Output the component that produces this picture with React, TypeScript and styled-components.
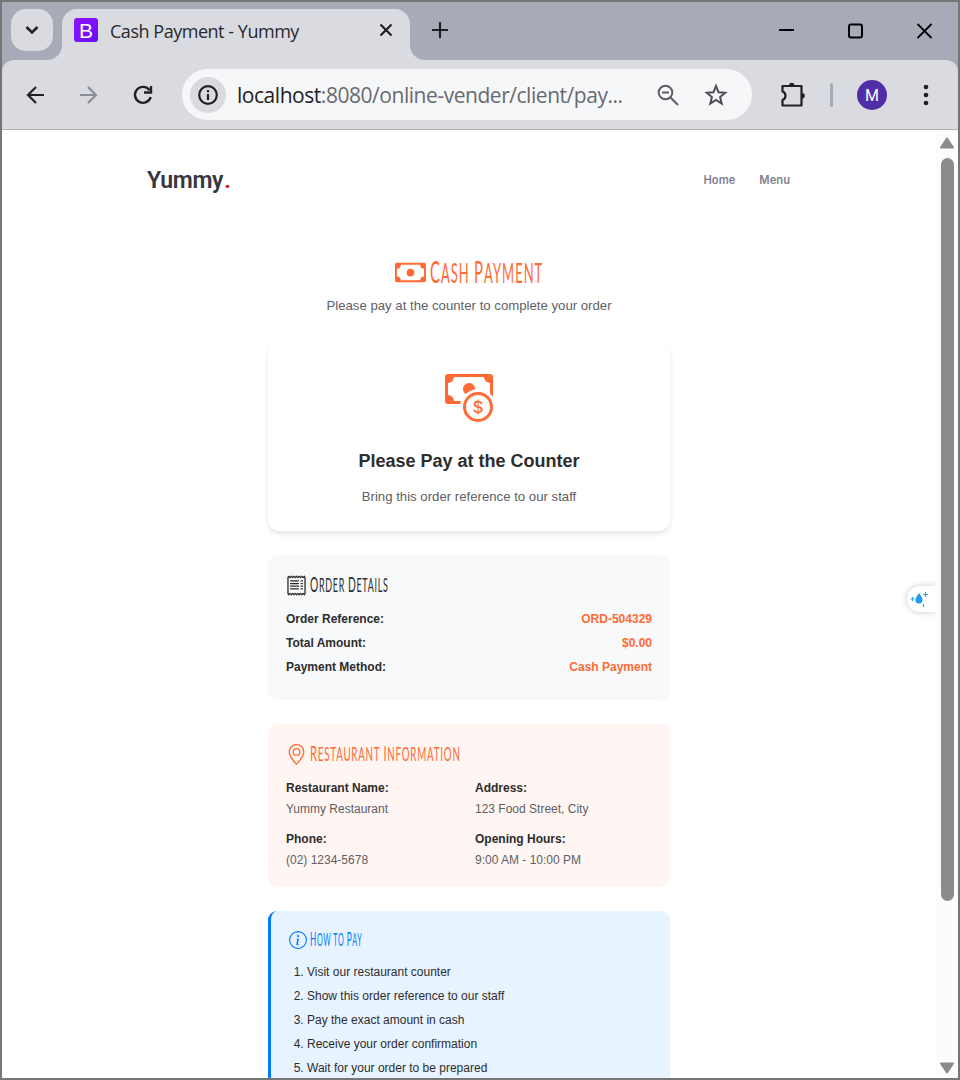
import React from 'react';
import styled, { createGlobalStyle } from 'styled-components';
import { BsCash, BsCashCoin, BsReceipt, BsGeoAlt, BsInfoCircle } from 'react-icons/bs';

const GlobalStyle = createGlobalStyle`
  * { box-sizing: border-box; }
  body { margin: 0; background: #fff; overflow: hidden; }
`;

const BrowserWindow = styled.div`
  width: 960px;
  height: 1080px;
  border: 2px solid #767676;
  overflow: hidden;
  display: flex;
  flex-direction: column;
  background: #a7abb7;
  font-family: 'Liberation Sans', Arial, sans-serif;
`;

const TabStrip = styled.header`
  height: 58px;
  flex: none;
  display: flex;
  padding: 7px 0 0 9px;
`;

const TabSearch = styled.button`
  width: 42px;
  height: 42px;
  padding: 0;
  border: 0;
  border-radius: 15px;
  background: #dadbe0;
  display: grid;
  place-items: center;
`;

const Tab = styled.div`
  position: relative;
  width: 348px;
  height: 51px;
  margin-left: 9px;
  border-radius: 15px 15px 0 0;
  background: #dadbe0;
  display: flex;
  align-items: center;
  padding: 0 16px 9px 12px;
  &::before, &::after {
    content: '';
    position: absolute;
    bottom: 0;
    width: 15px;
    height: 15px;
  }
  &::before { left: -15px; background: radial-gradient(circle at 0 0, transparent 14.5px, #dadbe0 15.5px); }
  &::after { right: -15px; background: radial-gradient(circle at 100% 0, transparent 14.5px, #dadbe0 15.5px); }
`;

const Favicon = styled.span`
  width: 24px;
  height: 24px;
  border-radius: 3px;
  background: linear-gradient(135deg, #9013fe, #6610f2);
  color: #fff;
  font: 500 21px/25px Roboto, sans-serif;
  font-family: 'Liberation Sans', sans-serif;
  text-align: center;
`;

const TabTitle = styled.span`
  flex: 1;
  margin-left: 12px;
  padding-top: 1px;
  font: 400 18px/24px 'Open Sans', sans-serif;
  letter-spacing: -0.47px;
  color: #28292c;
  white-space: nowrap;
`;

const NewTab = styled.span`
  margin: 13px 0 0 22px;
  height: 16px;
`;

const WindowControls = styled.div`
  margin-left: auto;
  padding: 14px 25px 0 0;
  display: flex;
  gap: 53px;
  height: 32px;
  svg { display: block; }
`;

const Toolbar = styled.nav`
  height: 70px;
  flex: none;
  display: flex;
  align-items: center;
  background: #dadbe0;
  border-bottom: 1px solid #b0b1b8;
  border-radius: 12px 12px 0 0;
  padding: 0 27px 0 23px;
  svg { display: block; flex: none; }
`;

const NavIcons = styled.div`
  display: flex;
  gap: 34px;
`;

const AddressBar = styled.div`
  width: 570px;
  height: 51px;
  margin: 0 28px 0 29px;
  border-radius: 26px;
  background: #f6f7f9;
  display: flex;
  align-items: center;
  padding: 0 24px 0 7.5px;
`;

const SiteInfo = styled.span`
  width: 36px;
  height: 36px;
  border-radius: 50%;
  background: #dadbe0;
  display: grid;
  place-items: center;
`;

const Url = styled.span`
  flex: 1;
  margin-left: 11.5px;
  font: 400 21px/30px 'Open Sans', sans-serif;
  letter-spacing: -0.46px;
  color: #686a6e;
  white-space: nowrap;
  b { font-weight: 400; color: #202124; }
`;

const AddressActions = styled.div`
  display: flex;
  gap: 24px;
`;

const Divider = styled.i`
  width: 3px;
  height: 24px;
  border-radius: 2px;
  background: #a7abb7;
  margin: 0 24px;
`;

const Avatar = styled.span`
  width: 30px;
  height: 30px;
  border-radius: 50%;
  background: #512da8;
  color: #fff;
  font: 400 16px/31px Roboto, sans-serif;
  text-align: center;
  margin-right: 36px;
`;

const Viewport = styled.div`
  position: relative;
  flex: 1;
  min-height: 0;
  display: flex;
  background: #fff;
`;

const Page = styled.div`
  flex: 1;
  min-width: 0;
  overflow: hidden;
`;

const SiteHeader = styled.div`
  height: 100px;
  display: flex;
  align-items: center;
  justify-content: space-between;
  padding: 0 146px 0 145px;
`;

const Brand = styled.div`
  font: 600 23px/27px Roboto, sans-serif;
  letter-spacing: -0.35px;
  color: #37373f;
  span { color: #ce1212; margin-left: 1px; }
`;

const Links = styled.div`
  display: flex;
  gap: 24px;
  font: 600 11.2px/18px Inter, sans-serif;
  color: #7f7f90;
`;

const Column = styled.main`
  width: 402px;
  margin: 27px auto 0;
`;

const PageTitle = styled.h1`
  margin: 0;
  height: 30px;
  display: flex;
  align-items: center;
  justify-content: center;
  gap: 4px;
  color: #ff6b35;
`;

const Subtitle = styled.p`
  margin: 9px 0 0;
  text-align: center;
  font-size: 13.2px;
  line-height: 20px;
  color: #5f6062;
`;

const Condensed = styled.span<{ $width: number; $scale: number; $size: number }>`
  display: block;
  width: ${p => p.$width}px;
  height: ${p => p.$size}px;
  span {
    display: block;
    width: max-content;
    transform: scaleX(${p => p.$scale});
    transform-origin: 0 50%;
    font: 400 ${p => p.$size * 0.87}px/${p => p.$size - 2}px Lato, sans-serif;
    letter-spacing: 0.08em;
    white-space: pre;
    text-transform: uppercase;
  }
  b { font-weight: 400; font-size: ${p => p.$size}px; }
`;

const PayCard = styled.section`
  margin-top: 26px;
  height: 189px;
  border-radius: 12px;
  box-shadow: 0 3px 5px rgba(0, 0, 0, 0.1);
  display: flex;
  flex-direction: column;
  align-items: center;
  padding-top: 32px;
  color: #ff6b35;
  h2 { margin: 27px 0 0; font-size: 18px; line-height: 24px; color: #2d2d2d; }
  p { margin: 14px 0 0; font-size: 13.2px; line-height: 20px; color: #5f6062; }
`;

const Panel = styled.section<{ $bg: string; $height: number; $accent?: string }>`
  margin-top: 24px;
  height: ${p => p.$height}px;
  border-radius: 9px;
  background: ${p => p.$bg};
  border-left: ${p => (p.$accent ? `3px solid ${p.$accent}` : '0')};
  padding: 18px;
  font-size: 12px;
  line-height: 18px;
  color: #2d2d2d;
`;

const PanelTitle = styled.h3<{ $color: string; $height: number; $gap: number }>`
  margin: 0 0 ${p => p.$gap}px;
  height: ${p => p.$height}px;
  display: flex;
  align-items: center;
  gap: 3px;
  color: ${p => p.$color};
`;

const DetailRow = styled.div`
  display: flex;
  justify-content: space-between;
  height: 24px;
  line-height: 24px;
  font-weight: 700;
  span { color: #ff6b35; }
`;

const InfoGrid = styled.div`
  display: grid;
  grid-template-columns: 189px 1fr;
  row-gap: 9px;
  line-height: 21px;
  p { margin: 0; color: #5f6062; }
`;

const Steps = styled.ol`
  margin: 0;
  padding-left: 18px;
  line-height: 24px;
`;

const Assistant = styled.div`
  position: absolute;
  left: 905px;
  top: 456px;
  width: 29px;
  height: 26px;
  border-radius: 13px 0 0 13px;
  background: #fff;
  box-shadow: 0 0 6px rgba(0, 0, 0, 0.22);
  clip-path: inset(-10px 0 -10px -10px);
  svg { display: block; }
`;

const ScrollTrack = styled.div`
  width: 22px;
  background: #fcfcfc;
  display: flex;
  flex-direction: column;
  align-items: center;
  padding: 7px 0 4px;
  svg { display: block; flex: none; }
`;

const ScrollThumb = styled.i`
  width: 13px;
  height: 743px;
  margin: 9px 0 auto;
  border-radius: 7px;
  background: #8b8b8b;
`;

const stroke = { fill: 'none', stroke: '#202124', strokeWidth: 2.2 };

function Fancy({ text, width, scale, size }: { text: string; width: number; scale: number; size: number }) {
  return (
    <Condensed $width={width} $scale={scale} $size={size}>
      <span>
        {text.split(' ').map((word, i) => (
          <React.Fragment key={word}>
            {i > 0 && ' '}
            {word === 'to' ? word : <><b>{word[0]}</b>{word.slice(1)}</>}
          </React.Fragment>
        ))}
      </span>
    </Condensed>
  );
}

const details = [
  ['Order Reference:', 'ORD-504329'],
  ['Total Amount:', '$0.00'],
  ['Payment Method:', 'Cash Payment'],
];

const info = [
  ['Restaurant Name:', 'Yummy Restaurant'],
  ['Address:', '123 Food Street, City'],
  ['Phone:', '(02) 1234-5678'],
  ['Opening Hours:', '9:00 AM - 10:00 PM'],
];

const steps = [
  'Visit our restaurant counter',
  'Show this order reference to our staff',
  'Pay the exact amount in cash',
  'Receive your order confirmation',
  'Wait for your order to be prepared',
];

export default function App() {
  return (
    <BrowserWindow>
      <GlobalStyle />
      <TabStrip>
        <TabSearch>
          <svg width="14" height="10" viewBox="0 0 14 10"><path d="M1.500 2l5.500 5.500L12.500 2" {...stroke} strokeWidth={2.6} /></svg>
        </TabSearch>
        <Tab>
          <Favicon>B</Favicon>
          <TabTitle>Cash Payment - Yummy</TabTitle>
          <svg width="16" height="16" viewBox="0 0 16 16"><path d="M2.5 2.5l11 11M13.5 2.5l-11 11" {...stroke} /></svg>
        </Tab>
        <NewTab>
          <svg width="16" height="16" viewBox="0 0 16 16"><path d="M8 0v16M0 8h16" {...stroke} /></svg>
        </NewTab>
        <WindowControls>
          <svg width="16" height="16" viewBox="0 0 16 16"><path d="M0 7h15" stroke="#000" strokeWidth="2" /></svg>
          <svg width="16" height="16" viewBox="0 0 16 16"><rect x="1" y="1.5" width="13" height="13" rx="2" fill="none" stroke="#000" strokeWidth="2" /></svg>
          <svg width="16" height="16" viewBox="0 0 16 16"><path d="M.5 1l14 14M14.500 1L.5 15" stroke="#000" strokeWidth="1.8" /></svg>
        </WindowControls>
      </TabStrip>
      <Toolbar>
        <NavIcons>
          <svg width="20" height="20" viewBox="0 0 20 20"><path d="M19 10H3M11 2l-8 8 8 8" {...stroke} /></svg>
          <svg width="20" height="20" viewBox="0 0 20 20"><path d="M1 10h16M9 2l8 8-8 8" {...stroke} stroke="#8c8e95" /></svg>
          <svg width="20" height="20" viewBox="0 0 20 20"><path d="M16.500 5.200A8 8 0 1 0 17.700 12" {...stroke} strokeWidth={2.4} /><path d="M18 1v6.500h-7" {...stroke} strokeWidth={2.4} /></svg>
        </NavIcons>
        <AddressBar>
          <SiteInfo>
            <svg width="20" height="20" viewBox="0 0 20 20"><circle cx="10" cy="10" r="8.8" {...stroke} /><path d="M10 9v6M10 5v2.2" {...stroke} /></svg>
          </SiteInfo>
          <Url><b>localhost</b>:8080/online-vender/client/pay...</Url>
          <AddressActions>
            <svg width="24" height="24" viewBox="0 0 24 24"><circle cx="9.5" cy="9.5" r="6.8" fill="none" stroke="#5c5e62" strokeWidth="2" /><path d="M6 9.5h7M14.5 14.5l7.500 7.500" fill="none" stroke="#5c5e62" strokeWidth="2" /></svg>
            <svg width="24" height="24" viewBox="0 0 24 24"><path d="M12 3l2.5 6.2 6.7.5-5.1 4.3 1.6 6.5L12 17l-5.700 3.500 1.600-6.500-5.100-4.300 6.700-.5z" fill="none" stroke="#4c4e52" strokeWidth="2" /></svg>
          </AddressActions>
        </AddressBar>
        <svg width="26" height="26" viewBox="0 0 26 26">
          <path d="M2.500 4h19v19.500h-19v-5.500c4-1.500 4-7 0-8.500z" {...stroke} strokeLinejoin="round" />
          <path d="M9 3.500a2.700 2.700 0 0 1 5.400 0zM22 11a2.800 2.800 0 0 1 0 5.600z" fill="#202124" />
        </svg>
        <Divider />
        <Avatar>M</Avatar>
        <svg width="6" height="22" viewBox="0 0 6 22"><g fill="#202124"><circle cx="3" cy="3" r="2.300" /><circle cx="3" cy="11" r="2.300" /><circle cx="3" cy="19" r="2.300" /></g></svg>
      </Toolbar>
      <Viewport>
        <Page>
          <SiteHeader>
            <Brand>Yummy<span>.</span></Brand>
            <Links><span>Home</span><span>Menu</span></Links>
          </SiteHeader>
          <Column>
            <PageTitle>
              <BsCash size={31} />
              <Fancy text="Cash Payment" width={114} scale={0.48} size={31} />
            </PageTitle>
            <Subtitle>Please pay at the counter to complete your order</Subtitle>
            <PayCard>
              <BsCashCoin size={48} />
              <h2>Please Pay at the Counter</h2>
              <p>Bring this order reference to our staff</p>
            </PayCard>
            <Panel $bg="#f8f9fa" $height={145}>
              <PanelTitle $color="#2d2d2d" $height={24} $gap={10}>
                <BsReceipt size={21} />
                <Fancy text="Order Details" width={78} scale={0.467} size={22} />
              </PanelTitle>
              {details.map(([label, value]) => <DetailRow key={label}>{label}<span>{value}</span></DetailRow>)}
            </Panel>
            <Panel $bg="#fff5f2" $height={163}>
              <PanelTitle $color="#ff6b35" $height={24} $gap={12}>
                <BsGeoAlt size={21} />
                <Fancy text="Restaurant Information" width={150} scale={0.51} size={22} />
              </PanelTitle>
              <InfoGrid>
                {info.map(([label, value]) => <div key={label}><b>{label}</b><p>{value}</p></div>)}
              </InfoGrid>
            </Panel>
            <Panel $bg="#e7f3ff" $height={220} $accent="#007bff">
              <PanelTitle $color="#007bff" $height={21} $gap={10}>
                <BsInfoCircle size={18} />
                <Fancy text="How to Pay" width={52} scale={0.437} size={19} />
              </PanelTitle>
              <Steps>{steps.map(s => <li key={s}>{s}</li>)}</Steps>
            </Panel>
          </Column>
        </Page>
        <ScrollTrack>
          <svg width="16" height="12" viewBox="0 0 16 12"><path d="M8 1.500l6 9H2z" fill="#8b8b8b" stroke="#8b8b8b" strokeWidth="2" strokeLinejoin="round" /></svg>
          <ScrollThumb />
          <svg width="16" height="12" viewBox="0 0 16 12"><path d="M8 10.500l6-9H2z" fill="#8b8b8b" stroke="#8b8b8b" strokeWidth="2" strokeLinejoin="round" /></svg>
        </ScrollTrack>
        <Assistant>
          <svg width="29" height="26" viewBox="0 0 29 26"><path d="M12 7c2 3 3.500 4.500 3.500 7a3.500 3.500 0 0 1-7 0c0-2.500 1.500-4 3.500-7z" fill="#1e9cf0" /><path d="M18.500 6v5M16 8.500h5M5.500 11v4M3.500 13h4M16.500 18v3" stroke="#2aa5f5" strokeWidth="1.200" /></svg>
        </Assistant>
      </Viewport>
    </BrowserWindow>
  );
}
